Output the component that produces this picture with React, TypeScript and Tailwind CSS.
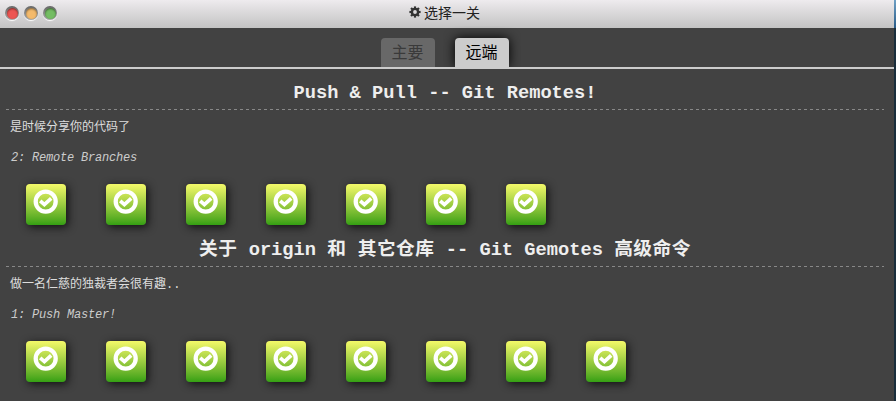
import React from "react";

const sans = "font-['Noto_Sans_CJK_SC',sans-serif]";
const mono = "font-['Liberation_Mono','Noto_Sans_CJK_SC',monospace]";

function Light({ color }: { color: string }) {
  return (
    <span className="flex h-[14px] w-[14px] items-center justify-center rounded-full bg-linear-to-b from-[#666] to-[#aaa] shadow-[0_1px_1px_#fff]">
      <span className={`h-[11px] w-[11px] rounded-full shadow-[inset_0_1px_2px_rgba(0,0,0,0.45)] ${color}`} />
    </span>
  );
}

function Gear() {
  const teeth = [0, 45, 90, 135, 180, 225, 270, 315];
  return (
    <svg width="12" height="12" viewBox="0 0 12 12" className="-mt-px text-[#333]">
      <circle cx="6" cy="6" r="3.1" fill="none" stroke="currentColor" strokeWidth="2.4" />
      {teeth.map((a) => (
        <rect key={a} x="4.9" y="0.4" width="2.2" height="2.2" fill="currentColor" transform={`rotate(${a} 6 6)`} />
      ))}
    </svg>
  );
}

function Level() {
  return (
    <div className="flex h-[41px] w-10 justify-center rounded-[4px] bg-linear-to-b from-[#f4f969] to-[#33a013] pt-[5px] shadow-[2px_2px_8px_#111]">
      <svg width="26" height="26" viewBox="0 0 26 26" className="-ml-px" fill="none" stroke="#fff">
        <circle cx="12.7" cy="12.6" r="10" strokeWidth="4.3" />
        <path d="M7.2 11.8 L11.4 15.6 L18.2 9.4" strokeWidth="3.7" />
      </svg>
    </div>
  );
}

type SeriesProps = { title: React.ReactNode; about: string; name: string; count: number };

function Series({ title, about, name, count }: SeriesProps) {
  return (
    <section className="h-[157px] pr-[10px] pl-[6px]">
      <h3 className="h-[28px] text-center text-[18.72px] leading-[25px] font-bold whitespace-pre text-[#eee]">{title}</h3>
      <div className="h-px bg-[repeating-linear-gradient(90deg,#888_0_3px,transparent_3px_6px)]" />
      <p className="mt-[9px] h-[18px] pl-[4px] text-[12px] leading-[18px] text-[#ddd]">{about}</p>
      <p className="mt-3 h-[18px] pl-[5px] text-[12px] leading-[18px] tracking-[-0.2px] text-[#ccc] italic">{name}</p>
      <div className="mt-[17px] flex gap-10 pl-5">
        {Array.from({ length: count }, (_, i) => (
          <Level key={i} />
        ))}
      </div>
    </section>
  );
}

function Wide({ children }: { children: string }) {
  return <span className="tracking-[0.5px]">{children}</span>;
}

export default function App() {
  return (
    <div className="flex h-[401px] w-[896px] overflow-hidden bg-[#424242]">
      <main className={`w-[894px] ${mono}`}>
        <header className="flex h-7 items-center bg-linear-to-b from-[#eeebee] to-[#c3c3c3]">
          <div className="-mt-[2px] flex w-[120px] gap-[5px] pl-[5px]">
            <Light color="bg-[#ed5552]" />
            <Light color="bg-[#f4ba6c]" />
            <Light color="bg-[#74bd63]" />
          </div>
          <div className={`-mt-[3px] flex flex-1 items-center justify-center gap-[3px] pr-[125px] text-[14px] leading-[25px] text-[#222] ${sans}`}>
            <Gear />
            <span>选择一关</span>
          </div>
        </header>
        <nav className={`flex h-[41px] items-end justify-center gap-5 border-b-2 border-[#ccc] pr-1 text-[16px] leading-[27px] ${sans}`}>
          <span className="h-[29px] w-[54px] rounded-t-[4px] bg-[#686868] pr-px text-center text-[#3a3a3a]">主要</span>
          <span className="h-[29px] w-[54px] rounded-t-[4px] bg-[#ccc] pr-px text-center text-black shadow-[0_0_12px_#000] [clip-path:inset(-12px_-12px_0_-12px)]">远端</span>
        </nav>
        <div className="pt-3">
          <Series title="Push & Pull -- Git Remotes!" about="是时候分享你的代码了" name="2: Remote Branches" count={7} />
          <Series
            title={
              <>
                <Wide>关于</Wide> origin <Wide>和</Wide> <Wide>其它仓库</Wide> -- Git Gemotes <Wide>高级命令</Wide>
              </>
            }
            about="做一名仁慈的独裁者会很有趣.."
            name="1: Push Master!"
            count={8}
          />
        </div>
      </main>
      <aside className="w-[2px] bg-[#192d3b]">
        <div className="h-7 bg-linear-to-b from-[#6fa0c4] to-[#285b88]" />
      </aside>
    </div>
  );
}
